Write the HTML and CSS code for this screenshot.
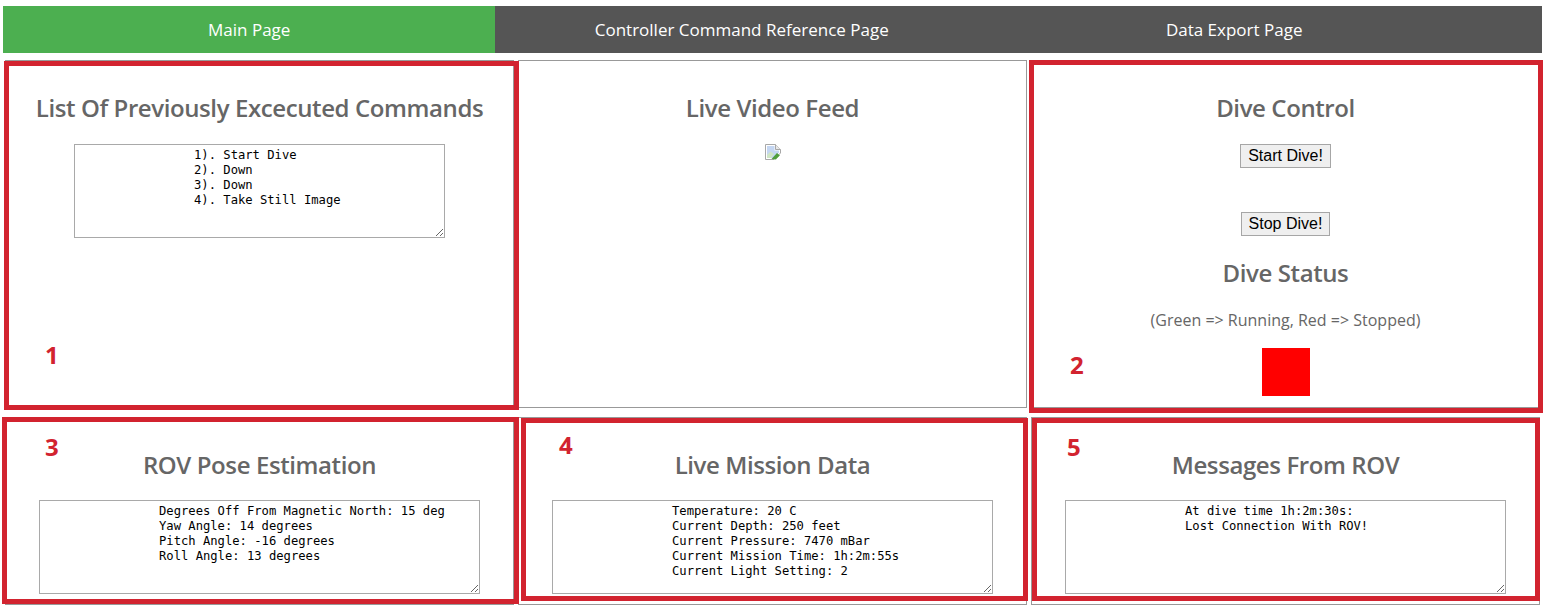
FILE: index.html
```html
<!DOCTYPE html>
<html lang="en">
<head>
<meta charset="utf-8">
<title>ROV Main Page</title>
<link rel="stylesheet" href="styles.css">
</head>
<body>
<nav class="nav">
  <a class="nav-link active" href="#">Main Page</a>
  <a class="nav-link" href="#">Controller Command Reference Page</a>
  <a class="nav-link" href="#">Data Export Page</a>
</nav>
<main class="grid">
  <section class="cell tall">
    <h2 class="title">List Of Previously Excecuted Commands</h2>
    <textarea class="log narrow" readonly>1). Start Dive
2). Down
3). Down
4). Take Still Image</textarea>
  </section>
  <section class="cell tall">
    <h2 class="title">Live Video Feed</h2>
    <svg class="broken" width="16" height="16" viewBox="0 0 16 16" role="img" aria-label="Broken image">
      <path d="M.5 .5H10.500L15.500 5.500V9L9 15.500H.5Z" fill="#fff" stroke="#a8a8a8"/>
      <path d="M10.500 .5V5.500H15.500" fill="#e8e8e8" stroke="#a8a8a8"/>
      <path d="M2 2H9.500V6.500H14V8.500L8.500 14H2Z" fill="#c4d6f2"/>
      <path d="M2 11L5.500 7.500L9 10L6 14H2Z" fill="#cfe5c6"/>
      <path d="M6.500 15L12 9L15 11.500L11 15.500Z" fill="#4f9e3c"/>
      <path d="M11 15.500L15.500 11V15.500Z" fill="#fff"/>
    </svg>
  </section>
  <section class="cell tall control">
    <h2 class="title">Dive Control</h2>
    <button class="dive-btn" type="button">Start Dive!</button>
    <button class="dive-btn second" type="button">Stop Dive!</button>
    <h2 class="title status-title">Dive Status</h2>
    <p class="note">(Green =&gt; Running, Red =&gt; Stopped)</p>
    <div class="lamp"></div>
  </section>
  <section class="cell short">
    <h2 class="title">ROV Pose Estimation</h2>
    <textarea class="log" readonly>Degrees Off From Magnetic North: 15 deg
Yaw Angle: 14 degrees
Pitch Angle: -16 degrees
Roll Angle: 13 degrees</textarea>
  </section>
  <section class="cell short">
    <h2 class="title">Live Mission Data</h2>
    <textarea class="log" readonly>Temperature: 20 C
Current Depth: 250 feet
Current Pressure: 7470 mBar
Current Mission Time: 1h:2m:55s
Current Light Setting: 2</textarea>
  </section>
  <section class="cell short">
    <h2 class="title">Messages From ROV</h2>
    <textarea class="log" readonly>At dive time 1h:2m:30s:
Lost Connection With ROV!</textarea>
  </section>
</main>
<div class="mark mark-1"><span class="num">1</span></div>
<div class="mark mark-2"><span class="num">2</span></div>
<div class="mark mark-3"><span class="num">3</span></div>
<div class="mark mark-4"><span class="num">4</span></div>
<div class="mark mark-5"><span class="num">5</span></div>
</body>
</html>
```

FILE: styles.css
```css
* { box-sizing: border-box; }
html, body { height: 100%; }
body {
  margin: 0;
  padding: 6px 3px 0;
  background: #fff;
  font-family: "Open Sans", sans-serif;
  color: #666;
  position: relative;
  overflow: hidden;
}
.nav {
  display: flex;
  height: 47px;
  background: #555;
}
.nav-link {
  width: 32%;
  display: flex;
  align-items: center;
  justify-content: center;
  color: #fff;
  text-decoration: none;
  font-size: 17px;
}
.nav-link.active { background: #4caf50; }
.grid {
  display: grid;
  grid-template-columns: repeat(3, 509px);
  grid-template-rows: 348px 188px;
  column-gap: 4px;
  row-gap: 9px;
  padding: 7px 2px 0;
}
.cell {
  border: 1px solid #999;
  display: flex;
  flex-direction: column;
  align-items: center;
  padding-top: 31px;
}
.title {
  margin: 0;
  font-size: 24px;
  line-height: 32px;
  font-weight: 600;
  letter-spacing: -0.4px;
  color: #666;
  text-align: center;
}
.log {
  display: block;
  margin-top: 20px;
  width: 441px;
  height: 94px;
  padding: 3px 2px 2px 119px;
  border: 1px solid #a9a9a9;
  border-radius: 0;
  background: #fff;
  color: #000;
  font-family: "DejaVu Sans Mono", monospace;
  font-size: 12.18px;
  line-height: 15px;
  outline: none;
  white-space: pre;
}
.log.narrow { width: 371px; }
.short .log { margin-top: 19px; }
.broken { display: block; margin-top: 20px; }
.dive-btn {
  margin-top: 20px;
  height: 24px;
  padding: 0 7px;
  border: 1px solid #a6a6a6;
  border-radius: 0;
  background: #efefef;
  color: #000;
  font-family: "Liberation Sans", Arial, sans-serif;
  font-size: 16px;
}
.dive-btn.second { margin-top: 44px; }
.status-title { margin-top: 21px; }
.note {
  margin: 20px 0 0;
  font-size: 16px;
  line-height: 22px;
  color: #666;
}
.lamp {
  margin-top: 17px;
  width: 48px;
  height: 48px;
  background: #f00;
}
.mark {
  position: absolute;
  border: 5px solid #d2232f;
  pointer-events: none;
}
.num {
  position: absolute;
  font-size: 24px;
  line-height: 28px;
  font-weight: 700;
  color: #d2232f;
}
.mark-1 { left: 4px; top: 61px; width: 515px; height: 349px; }
.mark-1 .num { left: 36px; top: 275px; }
.mark-2 { left: 1029px; top: 60px; width: 514px; height: 353px; }
.mark-2 .num { left: 36px; top: 286px; }
.mark-3 { left: 2px; top: 417px; width: 517px; height: 187px; }
.mark-3 .num { left: 38px; top: 11px; }
.mark-4 { left: 521px; top: 418px; width: 507px; height: 183px; }
.mark-4 .num { left: 33px; top: 8px; }
.mark-5 { left: 1032px; top: 418px; width: 508px; height: 183px; }
.mark-5 .num { left: 30px; top: 10px; }
```
